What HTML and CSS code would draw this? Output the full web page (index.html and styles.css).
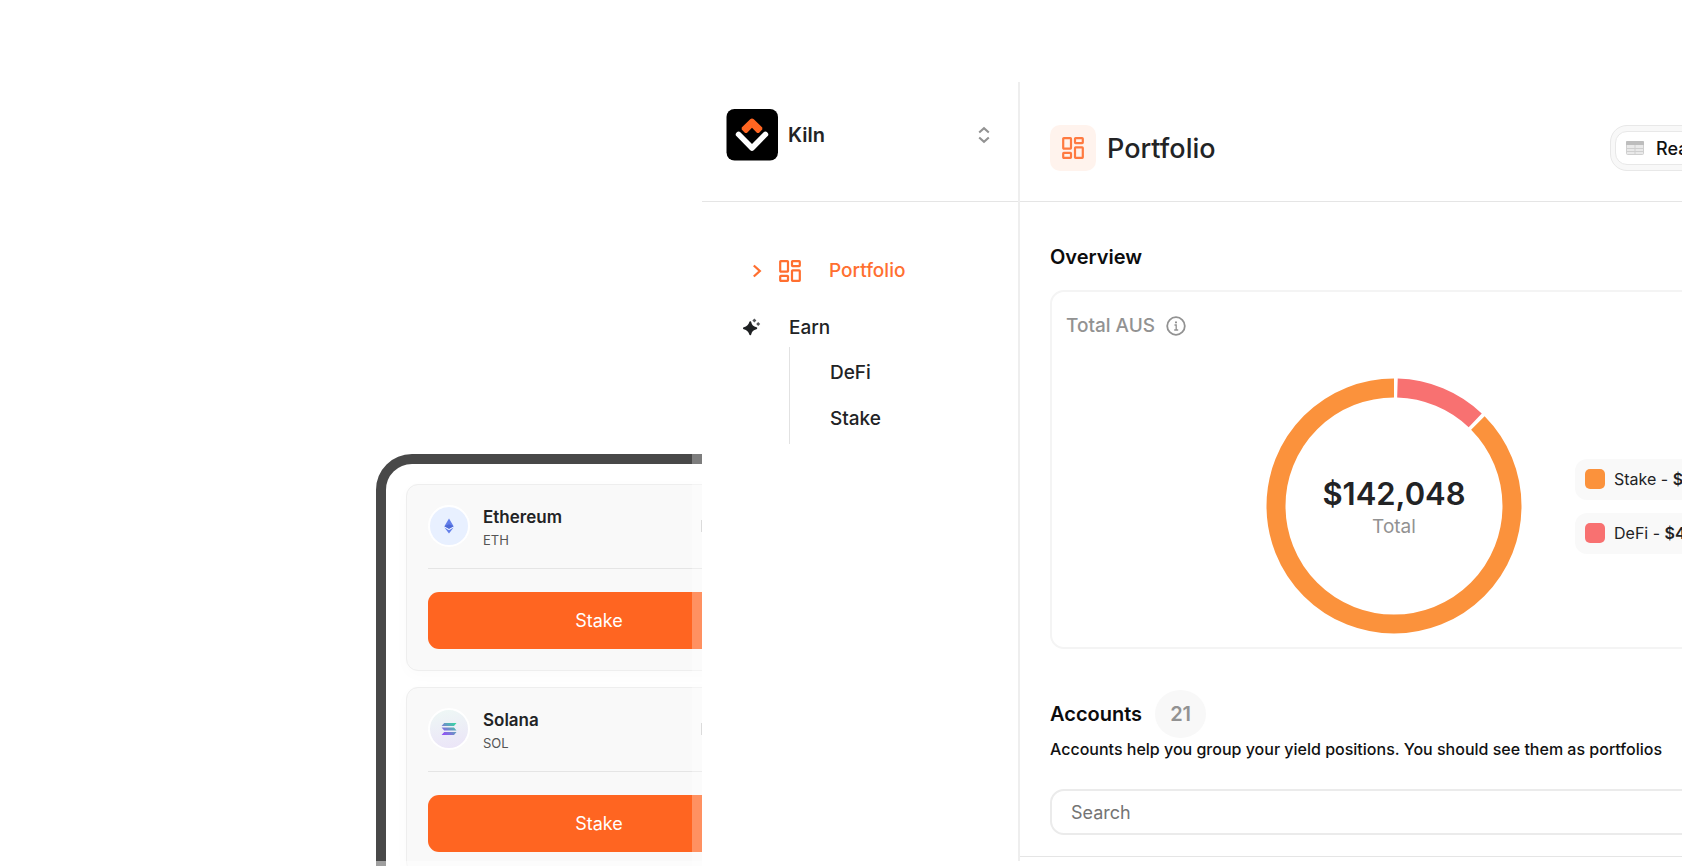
FILE: index.html
```html
<!DOCTYPE html>
<html lang="en">
<head>
<meta charset="utf-8">
<meta name="viewport" content="width=device-width, initial-scale=1">
<title>Kiln Portfolio</title>
<link rel="stylesheet" href="styles.css">
</head>
<body>
<svg class="sprite" aria-hidden="true">
  <symbol id="tiles" viewBox="0 0 22 22">
    <g fill="none" stroke="currentColor" stroke-width="2.200" stroke-linejoin="round">
      <rect x="1.200" y="1.200" width="7.800" height="10.400" rx=".6"/>
      <rect x="13" y="1.200" width="7.800" height="5" rx=".6"/>
      <rect x="1.200" y="15.800" width="7.800" height="5" rx=".6"/>
      <rect x="13" y="10.400" width="7.800" height="10.400" rx=".6"/>
    </g>
  </symbol>
</svg>
<div class="stage">
  <section class="mobile" aria-label="Staking">
    <div class="phone">
      <article class="asset">
        <div class="asset-head">
          <span class="token token-eth">
            <svg width="10" height="16" viewBox="0 0 10 16"><path fill="#627EEA" d="M5 .5 9.6 8.2 5 10.8.4 8.2z"/><path fill="#4d69d6" d="M5 6.2 9.6 8.2 5 10.8.4 8.2z"/><path fill="#627EEA" d="M.4 9.6 5 12.2l4.6-2.6L5 15.5z"/></svg>
          </span>
          <div class="asset-text"><h3 class="asset-name">Ethereum</h3><p class="asset-code">ETH</p></div>
          <span class="asset-mark"></span>
        </div>
        <hr class="rule">
        <button class="stake" type="button">Stake</button>
      </article>
      <article class="asset">
        <div class="asset-head">
          <span class="token token-sol">
            <svg width="16" height="14" viewBox="0 0 16 14"><defs><linearGradient id="sol" gradientUnits="userSpaceOnUse" x1="2" y1="14" x2="14" y2="0"><stop offset="0" stop-color="#9945FF"/><stop offset=".5" stop-color="#6f8fc8"/><stop offset="1" stop-color="#2fe0a0"/></linearGradient></defs><path fill="url(#sol)" d="M3.2 1h12.3L13 4H.6zM.6 5.500H13l2.500 3H3.200zM3.200 10h12.300L13 13H.6z"/></svg>
          </span>
          <div class="asset-text"><h3 class="asset-name">Solana</h3><p class="asset-code">SOL</p></div>
          <span class="asset-mark"></span>
        </div>
        <hr class="rule">
        <button class="stake" type="button">Stake</button>
      </article>
    </div>
  </section>

  <div class="dashboard">
    <aside class="sidebar">
      <button class="workspace" type="button">
        <svg width="52" height="52" viewBox="0 0 52 52"><rect x=".5" width="51.500" height="51.500" rx="8"/><path fill="#ff6521" d="M24.2 10.2q1.8-1.4 3.6 0L36.300 18.600v2L32.900 24h-1.800L26 18.800 20.900 24h-1.800l-3.400-3.400v-2z"/><path fill="none" stroke="#fff" stroke-width="5.600" stroke-linecap="round" stroke-linejoin="round" d="M12.600 25.400 26 39l13.400-13.600"/></svg>
        <span class="workspace-name">Kiln</span>
        <svg class="sorter" width="12" height="18" viewBox="0 0 12 18" fill="none" stroke="#929292" stroke-width="2.100"><path d="M1.200 6.600 6 2.200l4.800 4.400M1.200 11.400 6 15.800l4.800-4.400"/></svg>
      </button>
      <nav class="nav">
        <a class="nav-link nav-current" href="#portfolio">
          <svg width="10" height="14" viewBox="0 0 10 14" fill="none" stroke="currentColor" stroke-width="2.300"><path d="m1.800 1.500 6 5.500-6 5.500"/></svg>
          <svg width="22" height="22"><use href="#tiles"/></svg>
          <span class="nav-text">Portfolio</span>
        </a>
        <a class="nav-link nav-earn" href="#earn">
          <svg width="18" height="20" viewBox="0 0 18 20" fill="#1f2123"><path d="M7.300 4.300Q8.100 8.900 13.200 10.200 8.100 11.500 7.300 16.200 6.200 11.500 1 10.200 6.200 8.900 7.300 4.300z" stroke="#1f2123" stroke-width="2" stroke-linejoin="round"/><path fill="#55575a" d="m11.400.600 2 2-2 2-2-2z"/><path fill="#55575a" d="m15.200 3.900 2 2-2 2-2-2z"/></svg>
          <span>Earn</span>
        </a>
        <div class="subnav">
          <a href="#defi">DeFi</a>
          <a href="#stake">Stake</a>
        </div>
      </nav>
    </aside>

    <main class="main">
      <header class="topbar">
        <span class="title-icon"><svg width="22" height="22"><use href="#tiles"/></svg></span>
        <h1 class="title">Portfolio</h1>
        <div class="switch">
          <button class="switch-option" type="button">
            <svg width="18" height="16" viewBox="0 0 18 16"><rect x=".5" y="1.500" width="17" height="13" rx="1" fill="#e9e9e9" stroke="#cfcfcf"/><path fill="#bdbdbd" d="M0 2q0-1 1-1h16q1 0 1 1v3H0z"/><path d="M0 8.500h18M0 11.500h18M9 5v10" stroke="#cfcfcf" fill="none"/></svg>
            <span>Rea</span>
          </button>
        </div>
      </header>
      <div class="content">
        <h2 class="heading">Overview</h2>
        <section class="card">
          <div class="card-label">Total AUS
            <svg width="20" height="20" viewBox="0 0 20 20" fill="none" stroke="#929292" stroke-width="1.800"><circle cx="10" cy="10" r="8.800"/><path d="M8.500 9h1.700v5M8.200 14h4" stroke-width="1.300"/><path d="M9 6.300h2"/></svg>
          </div>
          <div class="chart-row">
            <div class="donut">
              <svg viewBox="0 0 256 256" fill="none" stroke-width="19">
                <circle cx="128" cy="128" r="118" pathLength="360" stroke="#fb923c" stroke-dasharray="314.700 45.300" stroke-dashoffset="-45.300" transform="rotate(-90 128 128)"/>
                <circle cx="128" cy="128" r="118" pathLength="360" stroke="#f87171" stroke-dasharray="41.800 318.200" stroke-dashoffset="-1.700" transform="rotate(-90 128 128)"/>
              </svg>
              <div class="donut-text"><strong class="amount">$142,048</strong><span class="amount-label">Total</span></div>
            </div>
            <ul class="legend">
              <li class="legend-item"><i class="swatch swatch-stake"></i><span>Stake - <b>$1</b></span></li>
              <li class="legend-item"><i class="swatch swatch-defi"></i><span>DeFi - <b>$4</b></span></li>
            </ul>
          </div>
        </section>
        <div class="accounts-head">
          <h2 class="heading">Accounts</h2><span class="count">21</span>
        </div>
        <p class="note">Accounts help you group your yield positions. You should see them as portfolios</p>
        <input class="search" type="search" placeholder="Search" aria-label="Search">
      </div>
      <hr class="rule">
    </main>
  </div>
</div>
</body>
</html>
```
FILE: styles.css
```css
* { box-sizing: border-box; }
body, h1, h2, h3, p, ul, hr { margin: 0; padding: 0; }
body {
  font-family: Inter, "Liberation Sans", sans-serif;
  color: #222325;
  background: #fff;
}
button, input { font: inherit; color: inherit; }
button { border: 0; background: none; padding: 0; cursor: pointer; }
a { color: inherit; text-decoration: none; }
svg { display: block; flex: none; }
.sprite { position: absolute; width: 0; height: 0; }
.rule { border: 0; border-top: 1px solid #e5e5e5; }

.stage {
  position: relative;
  display: grid;
  grid-template-columns: 702px 1fr;
  height: 100vh;
  overflow: hidden;
}
/* translucent frame edge along the bottom */
.stage::after {
  content: "";
  position: absolute;
  inset: auto 0 0 0;
  height: 5px;
  background: rgba(255, 255, 255, .48);
}

.mobile {
  position: relative;
  padding: 454px 0 0 376px;
  overflow: hidden;
}
/* translucent frame edge beside the dashboard */
.mobile::after {
  content: "";
  position: absolute;
  inset: 0 0 0 auto;
  width: 10px;
  background: rgba(255, 255, 255, .29);
}
.phone {
  width: 446px;
  padding: 20px;
  display: grid;
  gap: 16px;
  border: 10px solid #484848;
  border-radius: 36px;
}
.asset {
  padding: 20px 21px 21px;
  border: 1px solid #eee;
  border-radius: 12px;
  background: #f9f9f9;
  box-shadow: 0 4px 16px rgba(0, 0, 0, .02);
}
.asset-head {
  display: flex;
  align-items: center;
  gap: 13px;
  height: 42px;
  margin-bottom: 21px;
}
.token {
  display: grid;
  place-items: center;
  width: 42px;
  height: 42px;
  border: 2px solid #fff;
  border-radius: 50%;
}
.token-eth { background: #e8f0ff; }
.token-sol { background: linear-gradient(170deg, #eef8f5, #ebe4f8); }
.asset-text { padding-top: 4px; }
.asset-name { font-size: 17px; line-height: 24px; font-weight: 600; }
.asset-code { font-size: 13px; line-height: 22px; color: #555; }
.asset-mark { width: 2px; height: 12px; margin-left: auto; margin-right: 67px; background: #ccc; }
.stake {
  display: block;
  width: 100%;
  height: 57px;
  margin-top: 23px;
  border-radius: 11px;
  background: #ff6521;
  color: #fff;
  font-size: 18px;
}

.dashboard {
  display: grid;
  grid-template-columns: 316px 1fr;
  min-width: 0;
  margin: 82px 0 5px;
}
.workspace {
  display: flex;
  align-items: center;
  gap: 10px;
  width: 100%;
  height: 120px;
  padding: 0 28px 14px 24px;
  border-bottom: 1px solid #e5e5e5;
}
.workspace-name { font-size: 20px; font-weight: 600; }
.sorter { margin-left: auto; }
.nav {
  padding: 53px 24px 0 41px;
  font-size: 19px;
  line-height: 32px;
  font-weight: 500;
}
.nav-link { display: flex; align-items: center; gap: 28px; }
.nav-current { gap: 17px; padding-left: 9px; color: #ff6f30; }
.nav-text { padding-left: 11px; }
.nav-earn { margin-top: 25px; }
.subnav {
  display: grid;
  gap: 14px;
  margin: 3px 0 0 46px;
  padding: 10px 0 9px 40px;
  border-left: 1px solid #e2e2e2;
}

/* the panel runs past the right edge of the window */
.main {
  margin-right: -320px;
  border-left: 2px solid #eee;
}
.topbar {
  display: flex;
  align-items: center;
  gap: 11px;
  height: 120px;
  padding: 13px 30px 0;
  border-bottom: 1px solid #e5e5e5;
}
.title-icon {
  display: grid;
  place-items: center;
  width: 46px;
  height: 46px;
  border-radius: 10px;
  background: #fff3ed;
  color: #ff7a40;
}
.title { font-size: 27px; font-weight: 500; }
.switch {
  width: 362px;
  margin-left: auto;
  padding: 5px 4px;
  border: 1px solid #e8e8e8;
  border-radius: 17px;
  background: #f8f8f8;
}
.switch-option {
  display: flex;
  align-items: center;
  gap: 12px;
  height: 34px;
  width: 170px;
  padding: 0 10px;
  border: 1px solid #e8e8e8;
  border-radius: 12px;
  background: #fff;
  color: #111;
  font-size: 18px;
  font-weight: 500;
}
.content { padding: 43px 30px 21px; }
.heading { font-size: 20px; line-height: 24px; font-weight: 600; color: #0c0c0d; }
.card {
  height: 359px;
  margin-top: 21px;
  padding: 20px 14px;
  border: 2px solid #f4f4f4;
  border-radius: 14px;
}
.card-label {
  display: flex;
  align-items: center;
  gap: 11px;
  font-size: 19px;
  line-height: 28px;
  font-weight: 500;
  color: #929292;
}
.chart-row {
  display: flex;
  align-items: center;
  justify-content: center;
  gap: 53px;
  padding-top: 38px;
}
.donut { display: grid; width: 256px; height: 256px; }
.donut > * { grid-area: 1 / 1; }
.donut-text {
  display: flex;
  flex-direction: column;
  align-items: center;
  justify-content: center;
  gap: 1px;
  padding-top: 3px;
}
.amount { font-size: 31px; line-height: 38px; font-weight: 600; }
.amount-label { font-size: 19px; line-height: 26px; font-weight: 400; color: #929292; }
.legend { display: grid; gap: 13px; width: 181px; list-style: none; }
.legend-item {
  display: flex;
  align-items: center;
  gap: 9px;
  height: 41px;
  padding: 0 10px;
  border-radius: 12px;
  background: #f9f9f9;
  font-size: 16px;
}
.legend-item b { font-weight: 600; }
.swatch { width: 20px; height: 20px; border-radius: 5px; }
.swatch-stake { background: #fb923c; }
.swatch-defi { background: #f87171; }
.accounts-head { display: flex; align-items: center; gap: 13px; margin-top: 41px; }
.count {
  display: grid;
  place-items: center;
  width: 51px;
  height: 48px;
  border-radius: 50%;
  background: #f8f8f8;
  color: #929292;
  font-size: 20px;
  font-weight: 600;
}
.note { font-size: 16px; line-height: 22px; font-weight: 500; color: #111; }
.search {
  display: block;
  width: 100%;
  height: 46px;
  margin-top: 29px;
  padding: 0 19px;
  border: 2px solid #ebebeb;
  border-radius: 14px;
  background: #fff;
  font-size: 18px;
}
.search::placeholder { color: #747474; opacity: 1; }
```
